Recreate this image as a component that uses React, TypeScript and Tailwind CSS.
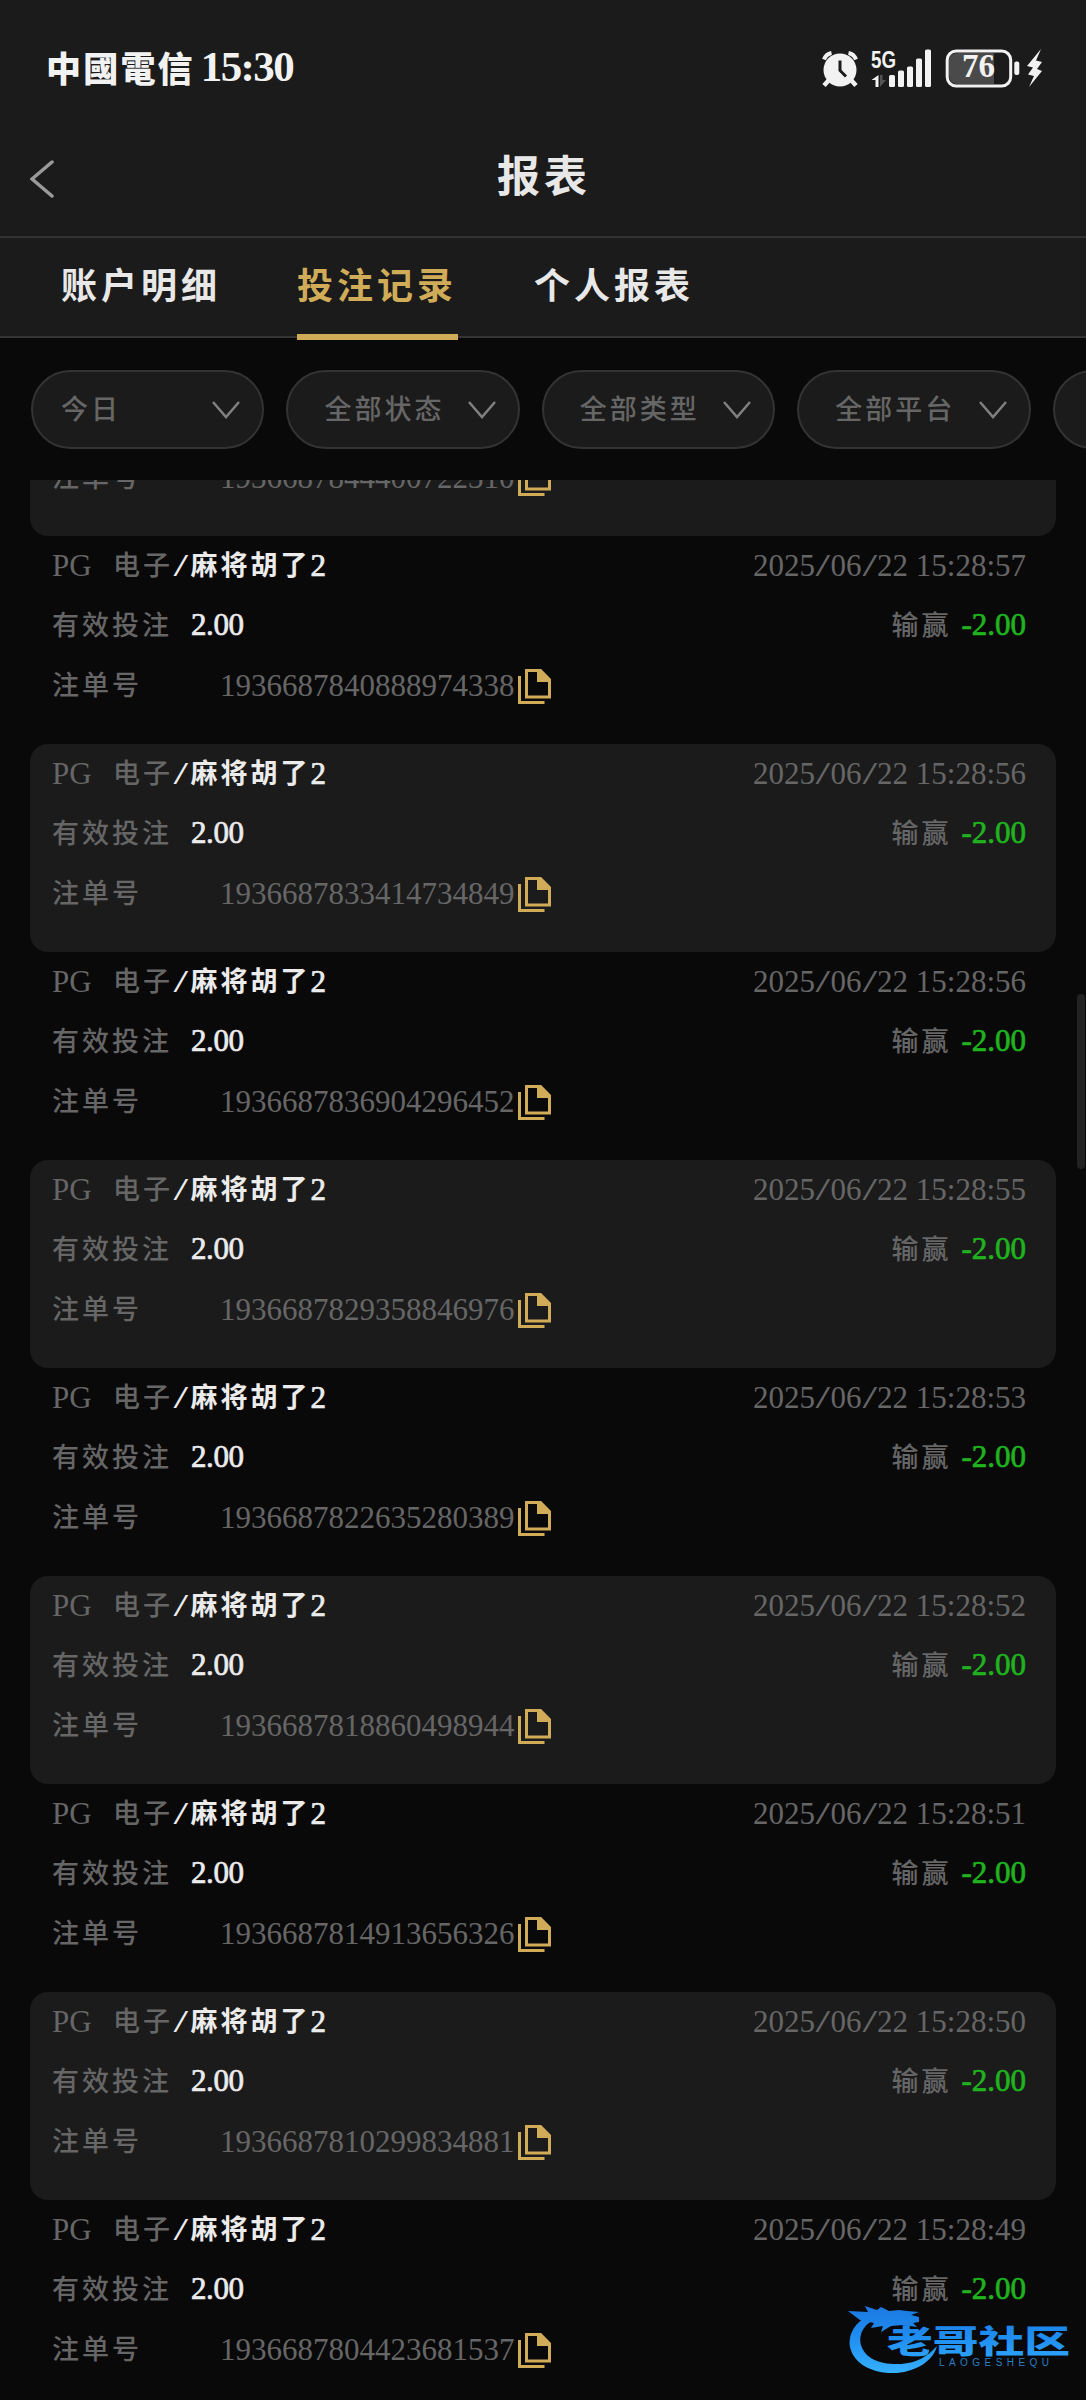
import type { ReactNode } from "react";

const tabs = ["账户明细", "投注记录", "个人报表"];

const filters = ["今日", "全部状态", "全部类型", "全部平台"];

const records = [
  { id: "1936687844400722310", time: "2025/06/22 15:28:58" },
  { id: "1936687840888974338", time: "2025/06/22 15:28:57" },
  { id: "1936687833414734849", time: "2025/06/22 15:28:56" },
  { id: "1936687836904296452", time: "2025/06/22 15:28:56" },
  { id: "1936687829358846976", time: "2025/06/22 15:28:55" },
  { id: "1936687822635280389", time: "2025/06/22 15:28:53" },
  { id: "1936687818860498944", time: "2025/06/22 15:28:52" },
  { id: "1936687814913656326", time: "2025/06/22 15:28:51" },
  { id: "1936687810299834881", time: "2025/06/22 15:28:50" },
  { id: "1936687804423681537", time: "2025/06/22 15:28:49" },
];

function Zh({ children, className = "font-medium" }: { children: ReactNode; className?: string }) {
  return (
    <span className={`pb-[3px] text-[27px] tracking-[3px] [font-family:'Noto_Sans_CJK_SC',sans-serif] ${className}`}>
      {children}
    </span>
  );
}

function Slash({ className = "" }: { className?: string }) {
  return <span className={`inline-block w-[15.500px] scale-x-[1.7] text-center ${className}`}>/</span>;
}

function Time({ value }: { value: string }) {
  const [date, clock] = value.split(" ");
  const [y, m, d] = date.split("/");
  return (
    <span>
      {y}
      <Slash />
      {m}
      <Slash />
      {d} {clock}
    </span>
  );
}

function StatusIcons() {
  return (
    <svg width="222" height="40" viewBox="821 50 222 40" fill="#f2f2f2">
      {/* alarm */}
      <path d="M824 60.500a10 10 0 0 1 7.500-6.500M856 60.500a10 10 0 0 0-7.500-6.500" stroke="#f2f2f2" strokeWidth="4" fill="none" />
      <path d="M829 81l-5 5.500M851 81l5 5.500" stroke="#f2f2f2" strokeWidth="4.500" />
      <circle cx="840" cy="71" r="16.500" />
      <path d="M840 61.500v10l6 6" stroke="#1b1b1b" strokeWidth="3" fill="none" />
      {/* signal */}
      <text x="871" y="69" fontSize="24" fontWeight="700" textLength="25" lengthAdjust="spacingAndGlyphs" fontFamily="Liberation Sans, sans-serif">
        5G
      </text>
      <path d="M878.500 76v12h-3v-7h-4z" />
      <path d="M880 76v12l6-7h-3.500v-5z" fill="#555" />
      <rect x="889" y="76" width="6" height="12" rx="1.500" />
      <rect x="898" y="71.500" width="6" height="16.500" rx="1.500" />
      <rect x="907" y="67.500" width="6" height="20.500" rx="1.500" />
      <rect x="916" y="59.500" width="6" height="28.500" rx="1.500" />
      <rect x="925" y="50.500" width="6" height="37.500" rx="1.500" />
      {/* battery */}
      <path d="M957 54h37v31h-37a8 8 0 0 1-8-8v-15a8 8 0 0 1 8-8z" fill="#4a4a4a" />
      <rect x="947.200" y="52" width="63.500" height="35" rx="9" fill="none" stroke="#f2f2f2" strokeWidth="3" />
      <rect x="1014.300" y="62.500" width="5" height="13.500" rx="2" />
      <text x="962" y="78" fontSize="33" fontWeight="700" textLength="33" fontFamily="Liberation Serif, serif">
        76
      </text>
      <path d="M1041 50l-14 17 6 1.500-5 7 6 1.500-5 11 13-16-5-2 5-7-6-1.500z" />
    </svg>
  );
}

function CopyIcon() {
  return (
    <svg width="33" height="35" viewBox="0 0 33 35" fill="none" stroke="#d0ac58" className="mt-[3px] shrink-0">
      <path d="M1.500 7v26.500h25" strokeWidth="3" />
      <path d="M8.500 1.500h14l9 9v17.500h-23z" strokeWidth="3" />
      <path d="M19 1h4l9 9v3h-13z" fill="#d0ac58" stroke="none" />
    </svg>
  );
}

function Record({ id, time, shaded }: { id: string; time: string; shaded: boolean }) {
  return (
    <div className={`h-[208px] shrink-0 rounded-[18px] pl-[22px] pr-[30px] ${shaded ? "bg-[#1b1b1b]" : ""}`}>
      <div className="flex h-[58px] items-center justify-between">
        <div className="flex items-center">
          <span className="w-[61px]">PG</span>
          <Zh className="w-[60px] font-medium">电子</Zh>
          <Slash className="text-[#ececec]" />
          <Zh className="ml-0.5 w-[120px] font-bold text-[#ececec]">麻将胡了</Zh>
          <span className="text-[#ececec] [-webkit-text-stroke:0.7px]">2</span>
        </div>
        <Time value={time} />
      </div>
      <div className="flex h-[61px] items-center justify-between">
        <div className="flex items-center">
          <Zh className="w-[139px] pb-1.5 font-medium">有效投注</Zh>
          <span className="text-[#ececec] tracking-[-0.4px] [-webkit-text-stroke:0.7px]">2.00</span>
        </div>
        <div className="flex items-center">
          <Zh className="mr-2.5 font-medium">输赢</Zh>
          <span className="text-[#1fb31f] [-webkit-text-stroke:0.7px]">-2.00</span>
        </div>
      </div>
      <div className="flex h-[60px] items-center">
        <Zh className="w-[168px] font-medium">注单号</Zh>
        <span className="w-[298px]">{id}</span>
        <CopyIcon />
      </div>
    </div>
  );
}

function Watermark() {
  return (
    <svg className="absolute left-[848px] top-[2303px]" width="224" height="72" viewBox="848 2303 224 72">
      <defs>
        <linearGradient id="blue" gradientUnits="userSpaceOnUse" x1="0" y1="2305" x2="0" y2="2373">
          <stop offset="0" stopColor="#1b78e0" />
          <stop offset="0.450" stopColor="#1f8cf0" />
          <stop offset="1" stopColor="#35b0ff" />
        </linearGradient>
      </defs>
      <g fill="url(#blue)">
        <path d="M872 2314c-17 7-24 20-22 33 4 18 24 27 47 26 20-2 36-12 40-27-9 10-20 17-36 18-20 1-36-5-40-19-3-12 4-22 17-27z" />
        <path d="M848 2311l20 1-3-6 12 4 4-3 8 4 10-1 8 1 12 1-8 3 8 2v5l-6 1 4 4-14-2-12 1-10 6 2-6-12 2 3-5-14-3z" />
        <text x="887" y="2353" fontSize="32" fontWeight="900" textLength="183" lengthAdjust="spacingAndGlyphs" fontFamily="Noto Sans CJK SC, sans-serif">
          老哥社区
        </text>
        <text x="939" y="2366" fontSize="10" textLength="110" fill="#2a7fc4" fontFamily="Liberation Sans, sans-serif">
          LAOGESHEQU
        </text>
      </g>
    </svg>
  );
}

export default function App() {
  return (
    <div className="relative flex h-[2400px] w-[1086px] flex-col overflow-hidden bg-[#090909] text-[31px] leading-none text-[#666] [font-family:'Liberation_Serif','Noto_Sans_CJK_SC',serif]">
      {/* Status bar */}
      <div className="flex h-[116px] items-center justify-between bg-[#1b1b1b] pl-[46px] pr-[43px] pt-[22px] text-[#f2f2f2]">
        <div className="flex items-center pb-1.5">
          <span className="text-[35px] font-black tracking-[2.2px] [font-family:'Noto_Sans_CJK_SC',sans-serif]">中國電信</span>
          <span className="ml-1.5 text-[43px] font-bold tracking-[-1.6px]">15:30</span>
        </div>
        <StatusIcons />
      </div>

      {/* Title */}
      <div className="flex h-[122px] items-center border-b-2 border-[#333] bg-[#1b1b1b] px-[30px]">
        <svg width="24" height="38" viewBox="0 0 24 38" fill="none" stroke="#9a9a9a" strokeWidth="3.500" strokeLinecap="round" className="mt-1.5">
          <path d="M22 2L2 19l20 17" />
        </svg>
        <h1 className="flex-1 pb-[5px] pr-[22px] text-center text-[43px] font-bold tracking-[4px] text-[#e8e8e8] [font-family:'Noto_Sans_CJK_SC',sans-serif]">
          报表
        </h1>
      </div>

      {/* Tabs */}
      <div className="flex h-[100px] shrink-0 gap-[76px] border-b-2 border-[#333] bg-[#1b1b1b] pl-[61px]">
        {tabs.map((tab, i) => (
          <div key={tab} className={`h-[102px] w-[161px] ${i === 1 ? "-ml-px border-b-[6px] border-[#d0ac58] text-[#d0ac58]" : "text-[#e8e8e8]"}`}>
            <div className="pt-[27px] text-[36px] font-bold leading-[36px] tracking-[4px] [font-family:'Noto_Sans_CJK_SC',sans-serif]">
              {tab}
            </div>
          </div>
        ))}
      </div>

      {/* Filters */}
      <div className="flex h-[142px] shrink-0 gap-[22px] pl-[31px] pt-8">
        {filters.map((label, i) => (
          <div
            key={label}
            className={`flex h-[79px] w-[233.400px] shrink-0 items-center justify-between rounded-full border-2 border-[#333] bg-[#1b1b1b] pr-[22px] ${
              i === 0 ? "pl-7" : "pl-9"
            }`}
          >
            <Zh className="pb-[5px] font-medium">{label}</Zh>
            <svg width="28" height="18" viewBox="0 0 28 18" fill="none" stroke="#808080" strokeWidth="2.500">
              <path d="M1 1l13 15L27 1" />
            </svg>
          </div>
        ))}
        <div className="h-[79px] w-[233.400px] shrink-0 rounded-full border-2 border-[#333] bg-[#1b1b1b]" />
      </div>

      {/* Records */}
      <div className="flex flex-1 flex-col justify-end overflow-hidden px-[30px]">
        <div className="-mb-[8px] flex flex-col">
          {records.map((r, i) => (
            <Record key={r.id} id={r.id} time={r.time} shaded={i % 2 === 0} />
          ))}
        </div>
      </div>

      <div className="absolute right-px top-[994px] h-[175px] w-2 rounded-full bg-[#222]" />
      <Watermark />
    </div>
  );
}
